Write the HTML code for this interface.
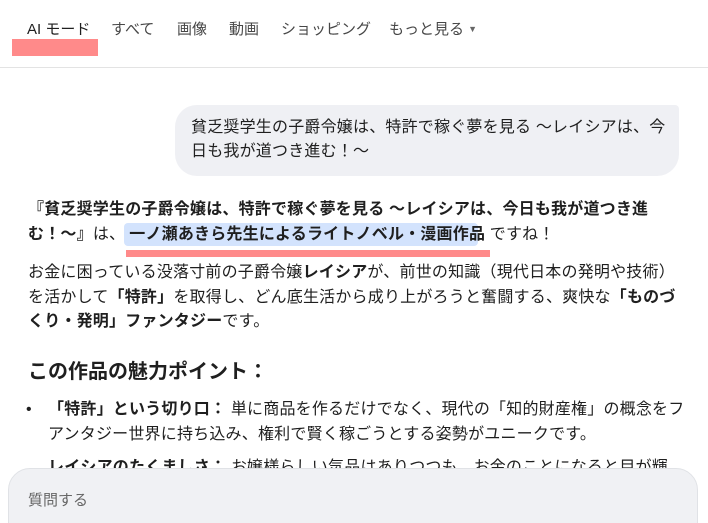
<!DOCTYPE html>
<html><head><meta charset="utf-8"><style>
*{margin:0;padding:0;box-sizing:border-box}
html,body{width:708px;height:523px;overflow:hidden}
body{background:#fff;font-family:"Liberation Sans","Noto Sans CJK JP",sans-serif;color:#1f1f1f;position:relative}
.a{position:absolute;white-space:nowrap}
.nav{font-size:15px;color:#474747;top:18px}
.t{font-size:16px;line-height:24px;letter-spacing:0.2px}
b{font-weight:700}
</style></head><body>
<div class="a nav" style="left:27px;color:#1f1f1f">AI モード</div>
<div class="a nav" style="left:111px">すべて</div>
<div class="a nav" style="left:177px">画像</div>
<div class="a nav" style="left:229px">動画</div>
<div class="a nav" style="left:281px">ショッピング</div>
<div class="a nav" style="left:389px">もっと見る <span style="font-size:9px;vertical-align:2px;color:#666">▼</span></div>
<div class="a" style="left:12px;top:39px;width:86px;height:17px;background:#ff8a8a"></div>
<div class="a" style="left:0;top:67px;width:708px;height:1px;background:#e3e3e3"></div>

<div class="a" style="left:175px;top:105px;width:504px;height:71px;background:#eff0f4;border-radius:22px 4px 22px 22px"></div>
<div class="a t" style="left:191px;top:116px">貧乏奨学生の子爵令嬢は、特許で稼ぐ夢を見る ～レイシアは、今</div>
<div class="a t" style="left:191px;top:140px">日も我が道つき進む！～</div>

<div class="a" style="left:124px;top:223px;width:354px;height:23px;background:#d3e3fd;border-radius:4px"></div>
<div class="a t" style="left:28px;top:198px"><b>『貧乏奨学生の子爵令嬢は、特許で稼ぐ夢を見る ～レイシアは、今日も我が道つき進</b></div>
<div class="a t" style="left:28px;top:223px"><b>む！～』</b>は、<b style="margin-left:4px">一ノ瀬あきら先生によるライトノベル・漫画作品</b> ですね！</div>
<div class="a" style="left:126px;top:250px;width:364px;height:7px;background:#ff8a8a"></div>

<div class="a t" style="left:28px;top:261px">お金に困っている没落寸前の子爵令嬢<b>レイシア</b>が、前世の知識（現代日本の発明や技術）</div>
<div class="a t" style="left:28px;top:286px">を活かして<b>「特許」</b>を取得し、どん底生活から成り上がろうと奮闘する、爽快な<b>「ものづ</b></div>
<div class="a t" style="left:28px;top:310px"><b>くり・発明」ファンタジー</b>です。</div>

<div class="a" style="left:28px;top:358px;font-size:20px;font-weight:700;line-height:28px">この作品の魅力ポイント：</div>
<div class="a t" style="left:26px;top:398px">•</div>
<div class="a t" style="left:48px;top:398px"><b>「特許」という切り口：</b> 単に商品を作るだけでなく、現代の「知的財産権」の概念をフ</div>
<div class="a t" style="left:48px;top:423px">アンタジー世界に持ち込み、権利で賢く稼ごうとする姿勢がユニークです。</div>
<div class="a t" style="left:48px;top:456px"><b>レイシアのたくましさ：</b> お嬢様らしい気品はありつつも、お金のことになると目が輝</div>

<div class="a" style="left:8px;top:468px;width:690px;height:80px;background:#f0f1f4;border:1px solid #e0e2e6;border-radius:22px"></div>
<div class="a" style="left:28px;top:489px;font-size:15px;color:#666">質問する</div>
</body></html>
